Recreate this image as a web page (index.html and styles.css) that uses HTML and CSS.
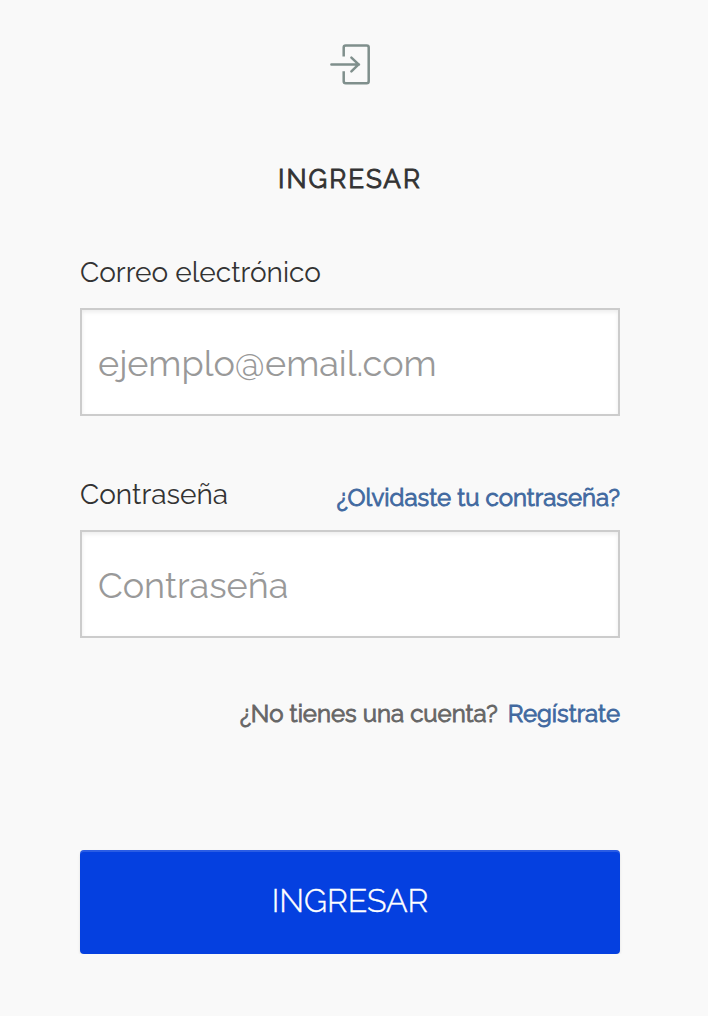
FILE: index.html
```html
<!DOCTYPE html>
<html lang="es">
<head>
<meta charset="utf-8">
<title>Ingresar</title>
<link rel="stylesheet" href="styles.css">
</head>
<body>
<main class="login">
  <svg class="login-icon" viewBox="0 0 42 42" fill="none" stroke="#7f8f8c" stroke-width="2.5" stroke-linecap="round" stroke-linejoin="round">
    <path d="M13.7 13.6V4.4q0-2 2-2h21q2 0 2 2v33.8q0 2-2 2h-21q-2 0-2-2V28.2" stroke-linecap="butt"/>
    <path d="M1.4 21.4h27.6M21.4 14.7l7.2 6.7-7.2 6.9"/>
  </svg>
  <h1 class="title">INGRESAR</h1>
  <form class="form">
    <div class="row"><label class="label" for="email">Correo electrónico</label></div>
    <input class="input" id="email" type="email" placeholder="ejemplo@email.com">
    <div class="row row-password">
      <label class="label" for="password">Contraseña</label>
      <a class="link link-forgot">¿Olvidaste tu contraseña?</a>
    </div>
    <input class="input" id="password" type="password" placeholder="Contraseña">
    <p class="signup"><span class="question">¿No tienes una cuenta?</span><a class="link">Regístrate</a></p>
    <button class="submit" type="button">INGRESAR</button>
  </form>
</main>
</body>
</html>
```
FILE: styles.css
```css
* { box-sizing: border-box; }
body {
  margin: 0;
  background: #f9f9f9;
  color: #333;
  font-family: Raleway, Lato, sans-serif;
}
.login {
  width: 540px;
  margin-left: 80px;
  padding-top: 43px;
  display: flex;
  flex-direction: column;
}
.login-icon { width: 42px; height: 42px; margin-left: 250px; }
.title {
  margin: 77px 0 0;
  height: 34px;
  font-size: 26px;
  line-height: 34px;
  font-weight: 400;
  letter-spacing: 2px;
  text-align: center;
  -webkit-text-stroke: .9px;
}
.form { display: flex; flex-direction: column; margin-top: 60px; }
.row {
  display: flex;
  justify-content: space-between;
  height: 52px;
  white-space: nowrap;
}
.row-password { margin-top: 62px; }
.label { font-size: 28px; line-height: 34px; }
.input {
  width: 100%;
  height: 108px;
  border: 2px solid #ccc;
  border-radius: 0;
  padding: 2px 16px 0;
  background: #fff;
  box-shadow: inset 0 2px 4px rgba(0, 0, 0, .08);
  font-family: inherit;
  font-size: 36px;
  outline: 0;
}
.input::placeholder { color: #999; opacity: 1; }
.link { color: #4169a0; }
.link, .question {
  font-size: 24px;
  line-height: 30px;
  font-weight: 400;
  -webkit-text-stroke: .9px;
}
.link-forgot { padding-top: 5px; }
.signup {
  display: flex;
  justify-content: flex-end;
  gap: 10px;
  height: 30px;
  margin: 61px 0 0;
  color: #666;
  white-space: nowrap;
}
.submit {
  height: 104px;
  margin-top: 121px;
  padding: 0 0 3px;
  border: 0;
  border-radius: 4px;
  background: #0540e0;
  box-shadow: inset 0 2px 0 rgba(255, 255, 255, .15), 0 2px 3px rgba(0, 0, 0, .1);
  color: #fff;
  font-family: inherit;
  font-size: 32px;
  font-weight: 300;
  -webkit-text-stroke: .4px;
}
```
